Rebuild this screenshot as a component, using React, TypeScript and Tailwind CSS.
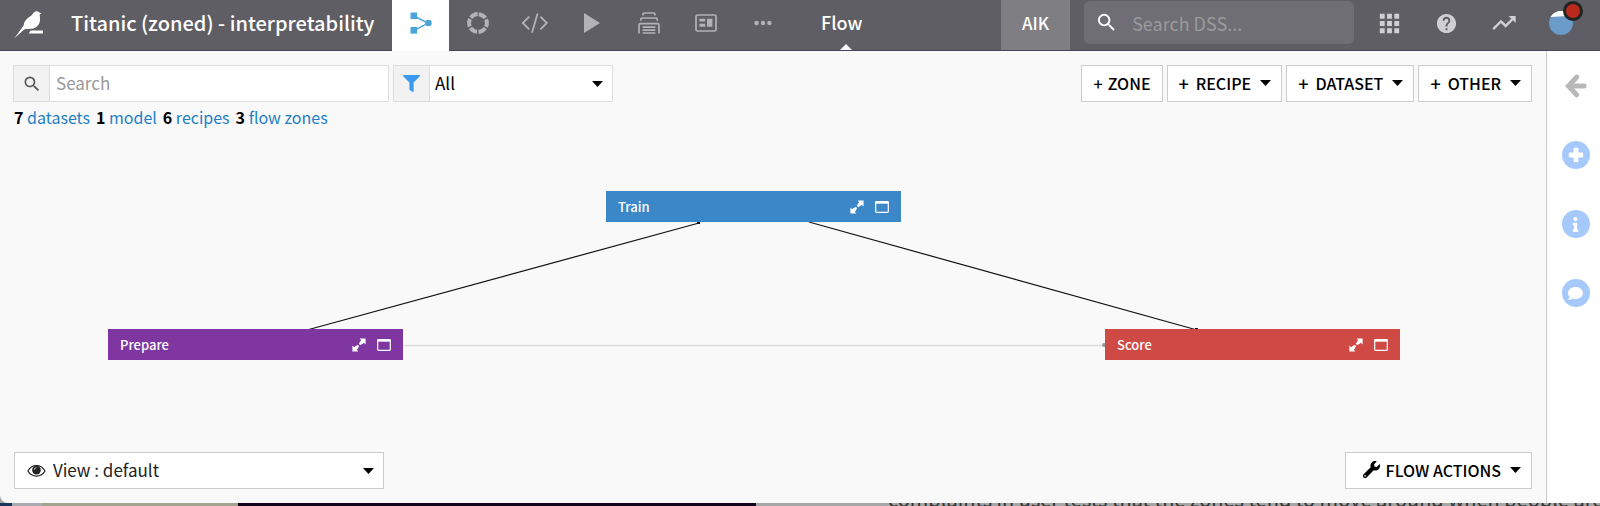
import type { ReactNode } from "react";
import { MdApps, MdHelp, MdSearch, MdTrendingUp } from "react-icons/md";
import { FaComment, FaFilter, FaInfo, FaWrench } from "react-icons/fa";

function BirdLogo() {
  return (
    <svg width="30" height="28" viewBox="0 0 30 28" fill="#fff" aria-hidden="true">
      <path d="M0.2 27.6 L9.6 14.4 C9.8 10.6 12.4 7.6 16 5.4 C18.2 4 18.6 2.6 19.8 1.4 C21.4 0 24 0 25.4 1.4 L27.4 2.2 L25.8 3.4 C25.6 5 26.2 6.4 26 9 C25.8 13.4 22.8 17.2 17.6 17.8 C15.4 18 13.4 17.8 11.8 18 C10.6 18.2 9.6 18.9 8.4 20 Z" />
      <path d="M16.6 19.4 H29 V22.6 H14.8 Z" />
    </svg>
  );
}

function FlowIcon() {
  return (
    <svg width="22" height="22" viewBox="0 0 22 22" aria-hidden="true">
      <path d="M4 4 L18 11 L4 18.6" fill="none" stroke="#4aa3d9" strokeWidth="1.4" />
      <rect x="0.5" y="0.5" width="6.6" height="6.6" fill="#4aa3d9" />
      <rect x="0.5" y="15" width="6.6" height="6.6" fill="#4aa3d9" />
      <circle cx="18.4" cy="11" r="3.3" fill="#4aa3d9" />
    </svg>
  );
}

function RingIcon() {
  return (
    <svg width="24" height="24" viewBox="0 0 24 24" aria-hidden="true">
      <circle
        cx="12"
        cy="12"
        r="8.9"
        fill="none"
        stroke="currentColor"
        strokeWidth="4"
        strokeDasharray="7.79 1.53"
        transform="rotate(-85 12 12)"
      />
    </svg>
  );
}

function CodeIcon() {
  return (
    <svg width="28" height="22" viewBox="0 0 28 22" fill="none" stroke="currentColor" strokeWidth="1.8" aria-hidden="true">
      <path d="M8.2 4.6 L1.8 11 L8.2 17.4 M19.4 4.6 L25.8 11 L19.4 17.4 M16.6 1.4 L11 20.8" />
    </svg>
  );
}

function PlayIcon() {
  return (
    <svg width="18" height="22" viewBox="0 0 18 22" fill="currentColor" aria-hidden="true">
      <path d="M1 1 L17 11 L1 21 Z" />
    </svg>
  );
}

function StackIcon() {
  return (
    <svg width="22" height="24" viewBox="0 0 22 24" fill="none" stroke="currentColor" strokeWidth="1.7" aria-hidden="true">
      <path d="M1 22.6 V14.2 Q1 12.6 2.6 12.6 H19.4 Q21 12.6 21 14.2 V22.6" />
      <path d="M4.6 16.2 H17.4 M4.6 19.2 H17.4 M4.6 22 H17.4" />
      <path d="M2.8 9.8 V8.6 Q2.8 7 4.4 7 H17.6 Q19.2 7 19.2 8.6 V9.8" />
      <path d="M5 4.6 V3.6 Q5 2 6.4 2 H15.6 Q17 2 17 3.6 V4.6" />
    </svg>
  );
}

function DashboardIcon() {
  return (
    <svg width="22" height="18" viewBox="0 0 22 18" aria-hidden="true">
      <rect x="1" y="1" width="20" height="16" rx="1.4" fill="none" stroke="currentColor" strokeWidth="1.7" />
      <path d="M4.4 4.8 H10.2 V7.6 H4.4 Z M4.4 9.8 H10.2 V12.8 H4.4 Z M12 4.8 H17.4 V12.8 H12 Z" fill="currentColor" />
    </svg>
  );
}

function DotsIcon() {
  return (
    <svg width="18" height="6" viewBox="0 0 18 6" fill="currentColor" aria-hidden="true">
      <circle cx="2.6" cy="3" r="2.2" />
      <circle cx="9" cy="3" r="2.2" />
      <circle cx="15.4" cy="3" r="2.2" />
    </svg>
  );
}

function EyeIcon() {
  return (
    <svg width="20" height="14" viewBox="0 0 20 14" aria-hidden="true">
      <path d="M1 7 C5 -0.6 15 -0.6 19 7 C15 14.2 5 14.2 1 7 Z" fill="none" stroke="#222" strokeWidth="1.3" />
      <circle cx="10" cy="6" r="4.6" fill="#222" />
      <path d="M7.6 5.8 A2.6 2.6 0 0 1 10 3.4" fill="none" stroke="#fff" strokeWidth="0.8" />
    </svg>
  );
}

function Caret() {
  return (
    <svg width="11" height="6" viewBox="0 0 11 6" fill="#000" aria-hidden="true">
      <path d="M0 0 H11 L5.5 6 Z" />
    </svg>
  );
}

function ExpandIcon() {
  return (
    <svg width="14" height="14" viewBox="0 0 14 14" aria-hidden="true">
      <path d="M3 11 L11 3" stroke="#fff" strokeWidth="2" strokeDasharray="4.9 1.5" />
      <path d="M7.6 0.4 H13.6 V6.4 L11.8 4.8 L9.6 6.6 L7.4 4.4 L9.2 2.2 Z M0.4 7.6 L2.2 9.2 L4.4 7.4 L6.6 9.6 L4.8 11.8 L6.4 13.6 H0.4 Z" fill="#fff" />
    </svg>
  );
}

function WindowIcon() {
  return (
    <svg width="14" height="12" viewBox="0 0 14 12" aria-hidden="true">
      <rect x="0.7" y="0.7" width="12.6" height="10.6" rx="0.8" fill="none" stroke="#fff" strokeWidth="1.2" />
      <rect x="0.5" y="0.5" width="13" height="2.2" fill="#fff" />
    </svg>
  );
}

function BackArrowIcon() {
  return (
    <svg width="22" height="24" viewBox="0 0 22 24" fill="none" stroke="currentColor" strokeWidth="5" aria-hidden="true">
      <path d="M11.6 3.2 L3.4 12 L11.6 20.8" strokeLinecap="round" />
      <path d="M5 12 H19" strokeLinecap="round" />
    </svg>
  );
}

function PlusIcon() {
  return (
    <svg width="16" height="16" viewBox="0 0 16 16" fill="currentColor" aria-hidden="true">
      <rect x="5.6" y="0.8" width="4.8" height="14.4" rx="1" />
      <rect x="0.8" y="5.6" width="14.4" height="4.8" rx="1" />
    </svg>
  );
}

const tools: { label: string; icon: ReactNode }[] = [
  { label: "Visual analyses", icon: <RingIcon /> },
  { label: "Code", icon: <CodeIcon /> },
  { label: "Jobs", icon: <PlayIcon /> },
  { label: "Automation", icon: <StackIcon /> },
  { label: "Dashboards", icon: <DashboardIcon /> },
  { label: "More", icon: <DotsIcon /> },
];

function Header() {
  return (
    <header className="flex h-[51px] shrink-0 border-b border-[#46455a] bg-[#5f5e64] text-white">
      <a href="#home" aria-label="Home" className="flex w-[71px] shrink-0 items-center pl-[14px]">
        <BirdLogo />
      </a>
      <h1 className="flex w-[321px] shrink-0 items-center whitespace-nowrap pb-1 text-[20px] font-medium leading-6">
        Titanic (zoned) - interpretability
      </h1>
      <nav className="flex shrink-0 text-[#b3b2b5]">
        <a href="#flow" aria-label="Flow" className="-mb-px flex w-[57px] items-center justify-center bg-white pb-[5px]">
          <FlowIcon />
        </a>
        {tools.map((tool) => (
          <button key={tool.label} type="button" aria-label={tool.label} className="flex w-[57px] items-center justify-center pb-1">
            {tool.icon}
          </button>
        ))}
      </nav>
      <div className="flex flex-col items-center justify-between pl-[30px] pt-[10px]">
        <span className="pr-2 text-[18px] font-medium leading-6">Flow</span>
        <svg width="12" height="6" viewBox="0 0 12 6" fill="#f9f9f9" aria-hidden="true">
          <path d="M0 6 L6 0 L12 6 Z" />
        </svg>
      </div>
      <div className="ml-auto flex w-[69px] items-center justify-center bg-[#7f7e83] pb-[5px] text-[17px] font-medium leading-6">AIK</div>
      <label className="mb-[6px] ml-[14px] mt-px flex w-[270px] items-center rounded-md bg-[#6f6e74] pl-[11px]">
        <MdSearch size={27} aria-hidden="true" />
        <input
          type="text"
          aria-label="Search DSS"
          placeholder="Search DSS..."
          className="ml-[14px] w-full min-w-0 bg-transparent text-[18px] leading-6 outline-none placeholder:text-[#9b9a9c]"
        />
      </label>
      <div className="ml-[7px] mr-[11px] flex text-[#d0cfd1]">
        <button type="button" aria-label="Applications" className="flex w-[57px] items-center justify-center pb-1">
          <MdApps size={29} />
        </button>
        <button type="button" aria-label="Help" className="flex w-[57px] items-center justify-center pb-1">
          <MdHelp size={23} />
        </button>
        <button type="button" aria-label="Activity" className="flex w-[57px] items-center justify-center pb-1">
          <MdTrendingUp size={28} />
        </button>
        <button type="button" aria-label="Profile" className="flex w-[57px] items-center justify-center pb-1">
          <span className="relative block">
            <svg width="24" height="24" viewBox="0 0 24 24" aria-hidden="true">
              <circle cx="12" cy="12" r="12" fill="#6b9bc9" />
              <path d="M1.6 6 A12 12 0 0 1 20 3 L18 5 Z" fill="#fff" />
            </svg>
            <span className="absolute -right-[10px] -top-[10px] size-5 rounded-full border-[3px] border-[#222] bg-[#b82a1c]" />
          </span>
        </button>
      </div>
    </header>
  );
}

function AddButton({ label, menu = true }: { label: string; menu?: boolean }) {
  return (
    <button
      type="button"
      className="flex h-[37px] items-center gap-[9px] whitespace-nowrap border border-[#ccc] bg-white pb-[2px] pl-[11px] pr-[10px] text-[16px] font-medium leading-6 text-black"
    >
      <span className={menu ? "flex gap-[7px]" : "flex gap-[5px] px-px"}>
        <span className={menu ? "text-[18px]" : "text-[16px]"}>+</span>
        <span>{label}</span>
      </span>
      {menu && <Caret />}
    </button>
  );
}

const counts: [number, string][] = [
  [7, "datasets"],
  [1, "model"],
  [6, "recipes"],
  [3, "flow zones"],
];

function Toolbar() {
  return (
    <div className="pl-[13px] pr-[14px] pt-[14px]">
      <div className="flex items-center gap-1">
        <label className="flex h-[37px] w-[376px] border border-[#ddd] bg-white">
          <span className="flex w-9 shrink-0 items-center justify-center border-r border-[#ddd] bg-[#f2f2f2] text-[#555]">
            <MdSearch size={20} aria-hidden="true" />
          </span>
          <input
            type="text"
            aria-label="Search"
            placeholder="Search"
            className="w-full min-w-0 px-[6px] pb-[2px] text-[17px] leading-6 outline-none placeholder:text-[#999]"
          />
        </label>
        <label className="relative flex h-[37px] w-[220px] border border-[#ddd] bg-white">
          <span className="flex w-9 shrink-0 items-center justify-center border-r border-[#ddd] bg-[#f2f2f2] text-[#3b99f0]">
            <FaFilter size={17} aria-hidden="true" />
          </span>
          <select aria-label="Filter" className="w-full appearance-none bg-transparent px-[5px] pb-[2px] text-[17px] leading-6 text-black outline-none">
            <option>All</option>
          </select>
          <span className="pointer-events-none absolute right-[9px] top-[15px]">
            <Caret />
          </span>
        </label>
        <div className="ml-auto flex gap-1">
          <AddButton label="ZONE" menu={false} />
          <AddButton label="RECIPE" />
          <AddButton label="DATASET" />
          <AddButton label="OTHER" />
        </div>
      </div>
      <p className="mt-[3px] flex gap-[6px] pl-px text-[16px] leading-6 text-[#1f7fc4]">
        {counts.map(([n, name]) => (
          <span key={name}>
            <b className="text-black">{n}</b> <a href="#list">{name}</a>
          </span>
        ))}
      </p>
    </div>
  );
}

function Zone({ name, place }: { name: string; place: string }) {
  return (
    <div className={`absolute flex h-[31px] w-[295px] items-center pl-3 pr-3 text-white ${place}`}>
      <span className="text-[13px] font-medium leading-5">{name}</span>
      <button type="button" aria-label={`Expand ${name}`} className="ml-auto">
        <ExpandIcon />
      </button>
      <button type="button" aria-label={`Open ${name}`} className="ml-[11px]">
        <WindowIcon />
      </button>
    </div>
  );
}

function FlowCanvas() {
  return (
    <section aria-label="Flow zones" className="relative min-h-[322px] flex-1">
      <svg className="absolute left-0 top-0" width="1546" height="322" viewBox="0 0 1546 322" aria-hidden="true">
        <path d="M403 216.5 H1104" stroke="#ddd" strokeWidth="1.4" />
        <circle cx="1104" cy="216" r="2" fill="#999" />
        <path d="M307 201 L699 94 M809 93 L1197 201" stroke="#111" strokeWidth="1.2" />
        <path d="M697 93 h3 v2 h-3 Z M1195 199 h3 v2 h-3 Z" fill="#111" />
      </svg>
      <Zone name="Train" place="left-[606px] top-[62px] bg-[#3b87c8]" />
      <Zone name="Prepare" place="left-[108px] top-[200px] bg-[#8036a0]" />
      <Zone name="Score" place="left-[1105px] top-[200px] bg-[#d04a45]" />
    </section>
  );
}

function Footer() {
  return (
    <div className="flex items-center justify-between pb-[14px] pl-[14px] pr-[14px]">
      <label className="relative flex h-[37px] w-[370px] items-center border border-[#ccc] bg-white pl-3">
        <EyeIcon />
        <select aria-label="View" className="h-full w-full appearance-none bg-transparent pb-[2px] pl-[7px] text-[17px] leading-6 text-[#222] outline-none">
          <option>View : default</option>
        </select>
        <span className="pointer-events-none absolute right-[9px] top-[15px]">
          <Caret />
        </span>
      </label>
      <button
        type="button"
        className="flex h-[37px] items-center gap-[9px] border border-[#ccc] bg-white pb-[2px] pl-[17px] pr-[10px] text-[16px] font-medium leading-6 text-black"
      >
        <span className="flex items-center gap-[6px]">
          <FaWrench size={17} />
          FLOW ACTIONS
        </span>
        <Caret />
      </button>
    </div>
  );
}

function SidePanel() {
  const round = "flex size-7 items-center justify-center rounded-full bg-[#a5c9fb] text-white";
  return (
    <aside className="flex w-[54px] shrink-0 flex-col items-center gap-[41px] border-l border-[#ccc] bg-white pl-1 pt-[21px]">
      <button type="button" aria-label="Collapse" className="flex size-7 items-center justify-center text-[#b8b8b8]">
        <BackArrowIcon />
      </button>
      <button type="button" aria-label="Add" className={round}>
        <PlusIcon />
      </button>
      <button type="button" aria-label="Details" className={round}>
        <FaInfo size={15} />
      </button>
      <button type="button" aria-label="Discussions" className={round}>
        <FaComment size={15} />
      </button>
    </aside>
  );
}

function BackgroundStrip() {
  return (
    <div className="flex h-[3px] shrink-0 overflow-hidden">
      <span className="w-3 shrink-0 bg-[#1c355c]" />
      <span className="w-[30px] shrink-0 bg-[#aaaab0]" />
      <span className="w-[196px] shrink-0 bg-[#a3a48f]" />
      <span className="w-[518px] shrink-0 bg-[#12041a]" />
      <span className="flex min-w-0 flex-1 items-end justify-start overflow-hidden whitespace-nowrap bg-[#a6a6a6] pl-[132px] text-[20px] leading-[14px] text-[#333]">
        complaints in user tests that the zones tend to move around when people are
      </span>
    </div>
  );
}

export default function App() {
  return (
    <div className="flex min-h-screen flex-col bg-[#a6a6a6] font-['Noto_Sans_CJK_SC',sans-serif]">
      <div className="flex flex-1 flex-col overflow-hidden rounded-bl-lg bg-[#f9f9f9]">
        <Header />
        <div className="flex flex-1">
          <main className="flex min-w-0 flex-1 flex-col">
            <Toolbar />
            <FlowCanvas />
            <Footer />
          </main>
          <SidePanel />
        </div>
      </div>
      <BackgroundStrip />
    </div>
  );
}
